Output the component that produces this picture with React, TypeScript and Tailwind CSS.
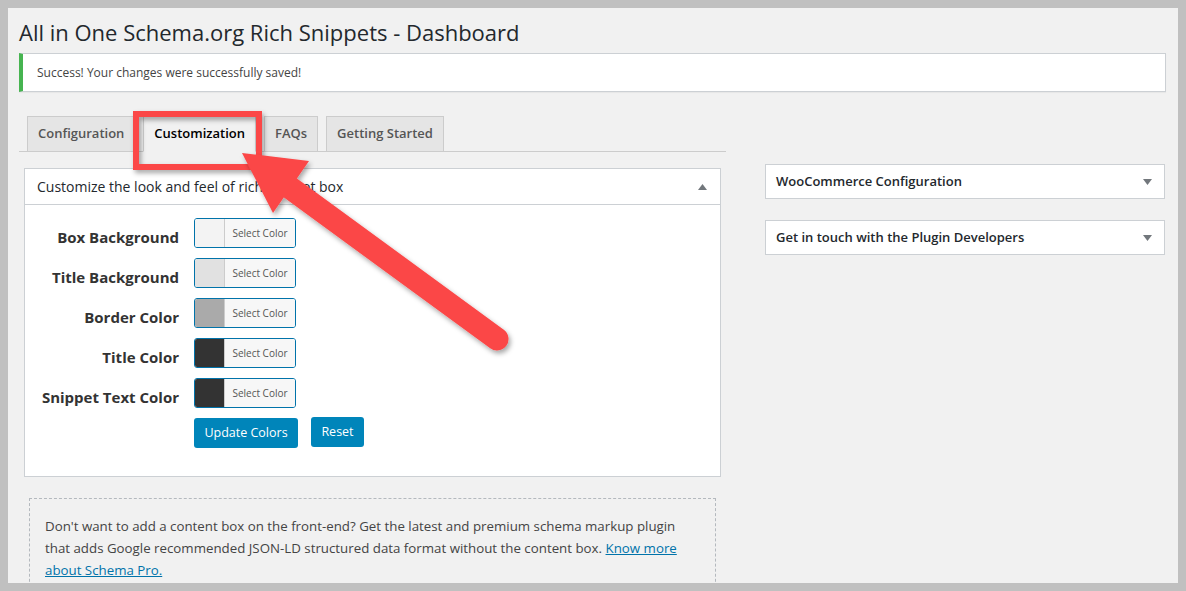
import React from 'react';

const font = { fontFamily: '"Open Sans", "Noto Sans", "Liberation Sans", sans-serif' };

const colorRows = [
  { label: 'Box Background', swatch: 'bg-[#f3f3f3]' },
  { label: 'Title Background', swatch: 'bg-[#e1e1e1]' },
  { label: 'Border Color', swatch: 'bg-[#aaaaaa]' },
  { label: 'Title Color', swatch: 'bg-[#333333]' },
  { label: 'Snippet Text Color', swatch: 'bg-[#333333]' },
];

const tabs = ['Configuration', 'Customization', 'FAQs', 'Getting Started'];

const Caret = ({ up }: { up?: boolean }) => (
  <svg width="9" height="6" viewBox="0 0 9 6" className="shrink-0">
    {up ? <polygon points="4.5,0 9,6 0,6" fill="#72777c" /> : <polygon points="0,0 9,0 4.5,6" fill="#72777c" />}
  </svg>
);

const SideBox = ({ title, className }: { title: string; className?: string }) => (
  <div className={`h-[35px] bg-white border border-[#ccd0d4] flex items-center justify-between pl-[10px] pr-[12px] ${className || ''}`}>
    <span className="text-[13px] font-semibold text-[#23282d]">{title}</span>
    <Caret />
  </div>
);

export default function App() {
  return (
    <div className="relative w-[1186px] h-[591px] bg-[#c0c0c0] pt-[8px] pl-[8px] pr-[8px] pb-[8px]" style={font}>
      <div className="h-full bg-[#f1f1f1] overflow-hidden pl-[11px] pr-[12px] pt-[10px]">
        <h1 className="text-[22px] leading-[29px] text-[#23282d] font-normal">
          All in One Schema.org Rich Snippets - Dashboard
        </h1>

        {/* Notice */}
        <div className="mt-[6px] h-[39px] bg-white border border-[#ccd0d4] border-l-4 border-l-[#46b450] flex items-center pl-[14px] shadow-[0_1px_1px_rgba(0,0,0,0.04)]">
          <p className="text-[12px] text-[#444]">Success! Your changes were successfully saved!</p>
        </div>

        <div className="flex mt-[25px]">
          {/* Left column */}
          <div className="w-[707px] shrink-0">
            <div className="flex items-end h-[35px] border-b border-[#ccc] pl-[8px] gap-[8px]">
              {tabs.map((t) => (
                <div
                  key={t}
                  className={
                    t === 'Customization'
                      ? 'h-[36px] -mb-px px-[10px] flex items-center bg-[#f1f1f1] border border-[#ccc] border-b-[#f1f1f1] text-[13px] font-semibold text-black'
                      : 'h-[35px] px-[10px] flex items-center bg-[#e5e5e5] border border-b-0 border-[#ccc] text-[13px] font-semibold text-[#555]'
                  }
                >
                  {t}
                </div>
              ))}
            </div>

            {/* Customize postbox */}
            <div className="mt-[16px] ml-[5px] w-[697px] h-[309px] bg-white border border-[#ccd0d4]">
              <div className="h-[36px] border-b border-[#ccd0d4] flex items-center justify-between pl-[12px] pr-[13px]">
                <span className="text-[14px] text-[#23282d]">Customize the look and feel of rich snippet box</span>
                <Caret up />
              </div>
              <div className="pt-[13px] flex flex-col gap-[10px]">
                {colorRows.map((r) => (
                  <div key={r.label} className="flex items-center h-[30px]">
                    <div className="w-[154px] text-right text-[15px] font-bold text-[#333] pt-[8px]">{r.label}</div>
                    <div className="ml-[15px] w-[102px] h-[30px] rounded-[3px] border border-[#0073aa] flex overflow-hidden">
                      <div className={`w-[30px] h-full border-r border-[#ccc] ${r.swatch}`} />
                      <div className="flex-1 bg-[#f7f7f7] flex items-center justify-center text-[10px] text-[#555]">
                        Select Color
                      </div>
                    </div>
                  </div>
                ))}
                <div className="flex items-center h-[30px] pl-[169px] gap-[13px]">
                  <button className="h-[30px] w-[104px] rounded-[3px] bg-[#0085ba] text-white text-[12.5px]">Update Colors</button>
                  <button className="h-[30px] w-[53px] -mt-[2px] rounded-[3px] bg-[#0085ba] text-white text-[12.5px]">Reset</button>
                </div>
              </div>
            </div>

            {/* Schema Pro notice */}
            <div className="mt-[21px] ml-[10px] w-[687px] border border-dashed border-[#b4b9be] px-[15px] pt-[16px] pb-[20px]">
              <p className="text-[13.3px] leading-[22px] text-[#444]">
                Don't want to add a content box on the front-end? Get the latest and premium schema markup plugin that adds Google recommended JSON-LD structured data format without the content box.{' '}
                <a className="text-[#0073aa] underline">Know more about Schema Pro.</a>
              </p>
            </div>
          </div>

          {/* Right column */}
          <div className="ml-[39px] w-[400px] pt-[47px]">
            <SideBox title="WooCommerce Configuration" className="mb-[21px]" />
            <SideBox title="Get in touch with the Plugin Developers" />
          </div>
        </div>
      </div>

      {/* Annotation overlay */}
      <svg className="absolute inset-0 pointer-events-none" width="1186" height="591" viewBox="0 0 1186 591">
        <defs>
          <filter id="sh" x="-20%" y="-20%" width="140%" height="140%">
            <feDropShadow dx="2" dy="3" stdDeviation="2.5" floodColor="#000" floodOpacity="0.35" />
          </filter>
        </defs>
        <rect x="136" y="114" width="123" height="53" fill="none" stroke="#fb4747" strokeWidth="6" filter="url(#sh)" />
        <g filter="url(#sh)">
          <line x1="285" y1="184" x2="497" y2="339" stroke="#fb4747" strokeWidth="23" strokeLinecap="round" />
          <polygon points="242,153 309,161 273,213" fill="#fb4747" />
        </g>
      </svg>
    </div>
  );
}
